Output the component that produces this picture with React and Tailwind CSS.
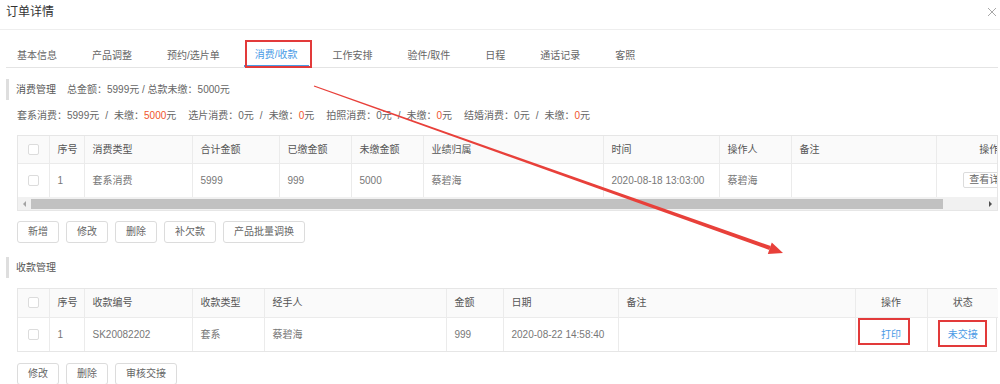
import React from 'react'

const tabs = ['基本信息', '产品调整', '预约/选片单', '消费/收款', '工作安排', '验件/取件', '日程', '通话记录', '客照']

const consume = [
  { name: '套系消费', total: '5999', unpaid: '5000' },
  { name: '选片消费', total: '0', unpaid: '0' },
  { name: '拍照消费', total: '0', unpaid: '0' },
  { name: '结婚消费', total: '0', unpaid: '0' },
]

function Checkbox() {
  return <span className="block w-[11px] h-[11px] mx-auto border border-[#dcdcdc] rounded-[2px] bg-white"></span>
}

function Btn({ children }) {
  return (
    <button className="h-[22px] px-[10px] border border-[#dcdcdc] rounded-[3px] bg-white text-[#666] leading-[20px]">
      {children}
    </button>
  )
}

function SectionTitle({ children }) {
  return (
    <div className="ml-[6px] h-[21px] flex items-center border-l-[3px] border-[#dedede] pl-[7px]">
      {children}
    </div>
  )
}

export default function App() {
  const th = 'border-r border-[#ebebeb] text-left font-normal text-[#555] pl-[8px] whitespace-nowrap'
  const td = 'border-r border-[#ebebeb] pl-[8px] text-[#777] whitespace-nowrap'

  return (
    <div className="relative w-[1000px] h-[384px] overflow-hidden bg-white text-[10px] text-[#666] font-['Liberation_Sans','Noto_Sans_CJK_SC',sans-serif]">
      {/* Header */}
      <div className="h-[30px] border-b border-[#eeeeee] flex items-start justify-between pt-[4px] pl-[6px] pr-[3px]">
        <span className="text-[12px] leading-[16px] text-[#333]">订单详情</span>
        <svg width="10" height="10" viewBox="0 0 10 10" className="mt-[3px]">
          <path d="M1 1L9 9M9 1L1 9" stroke="#a8a8a8" strokeWidth="1" />
        </svg>
      </div>

      {/* Tabs */}
      <div className="mt-[13px] mx-[6px] mr-[2px] border-b border-[#e4e4e4] flex gap-[13px]">
        {tabs.map((t) => {
          const active = t === '消费/收款'
          return (
            <div
              key={t}
              className={
                'relative h-[24px] px-[11px] flex items-center whitespace-nowrap ' +
                (active ? 'text-[#4a9be6] border-b-2 border-[#4a9be6] -mb-px' : 'text-[#666]')
              }
            >
              {t}
              {active && (
                <span className="absolute -top-[3px] left-[1px] w-[67px] h-[28px] border-2 border-[#e23a3a]"></span>
              )}
            </div>
          )
        })}
      </div>

      {/* 消费管理 */}
      <div className="mt-[11px]">
        <SectionTitle>
          <span className="text-[#555]">消费管理</span>
          <span className="ml-[11px]">总金额：5999元 / 总款未缴：5000元</span>
        </SectionTitle>
      </div>

      <div className="mt-[8px] ml-[17px] flex items-center h-[14px] whitespace-nowrap">
        {consume.map((c, i) => (
          <span key={c.name} className={i > 0 ? 'ml-[12px]' : ''}>
            {c.name}：{c.total}元<span className="mx-[6px]">/</span>未缴：<span className="text-[#f0552c]">{c.unpaid}</span>元
          </span>
        ))}
      </div>

      {/* Table 1 */}
      <div className="mt-[13px] ml-[17px] w-[981px] border border-[#e6e6e6] overflow-hidden">
        <table className="table-fixed border-collapse w-[1024px]">
          <colgroup>
            <col className="w-[31px]" />
            <col className="w-[35px]" />
            <col className="w-[108px]" />
            <col className="w-[87px]" />
            <col className="w-[72px]" />
            <col className="w-[72px]" />
            <col className="w-[180px]" />
            <col className="w-[116px]" />
            <col className="w-[72px]" />
            <col className="w-[145px]" />
            <col className="w-[106px]" />
          </colgroup>
          <thead>
            <tr className="h-[27px] bg-[#fafafa] border-b border-[#ebebeb]">
              <th className="border-r border-[#ebebeb]"><Checkbox /></th>
              <th className={th + ' pl-[7px]'}>序号</th>
              <th className={th}>消费类型</th>
              <th className={th}>合计金额</th>
              <th className={th}>已缴金额</th>
              <th className={th}>未缴金额</th>
              <th className={th}>业绩归属</th>
              <th className={th}>时间</th>
              <th className={th}>操作人</th>
              <th className={th}>备注</th>
              <th className="text-center font-normal text-[#555]">操作</th>
            </tr>
          </thead>
          <tbody>
            <tr className="h-[34px]">
              <td className="border-r border-[#ebebeb]"><Checkbox /></td>
              <td className={td + ' pl-[7px]'}>1</td>
              <td className={td}>套系消费</td>
              <td className={td}>5999</td>
              <td className={td}>999</td>
              <td className={td}>5000</td>
              <td className={td}>蔡碧海</td>
              <td className={td}>2020-08-18 13:03:00</td>
              <td className={td}>蔡碧海</td>
              <td className={td}></td>
              <td className="text-center">
                <span className="inline-block h-[16px] leading-[14px] px-[5px] border border-[#dcdcdc] rounded-[2px] text-[#666]">查看详情</span>
              </td>
            </tr>
          </tbody>
        </table>
        {/* scrollbar */}
        <div className="h-[13px] bg-[#f1f1f1] flex items-center">
          <div className="w-[13px] h-full flex items-center justify-center">
            <span className="w-0 h-0 border-y-[3px] border-y-transparent border-r-[3px] border-r-[#a3a3a3]"></span>
          </div>
          <div className="w-[912px] h-[10px] bg-[#c1c1c1]"></div>
          <div className="flex-1"></div>
          <div className="w-[13px] h-full flex items-center justify-center">
            <span className="w-0 h-0 border-y-[3px] border-y-transparent border-l-[3px] border-l-[#505050]"></span>
          </div>
        </div>
      </div>

      <div className="mt-[10px] ml-[17px] flex gap-[7px]">
        <Btn>新增</Btn>
        <Btn>修改</Btn>
        <Btn>删除</Btn>
        <Btn>补欠款</Btn>
        <Btn>产品批量调换</Btn>
      </div>

      {/* 收款管理 */}
      <div className="mt-[14px]">
        <SectionTitle>
          <span className="text-[#555]">收款管理</span>
        </SectionTitle>
      </div>

      <div className="mt-[10px] ml-[17px] w-[980px] border border-[#e6e6e6]">
        <table className="table-fixed border-collapse w-full">
          <colgroup>
            <col className="w-[31px]" />
            <col className="w-[35px]" />
            <col className="w-[108px]" />
            <col className="w-[72px]" />
            <col className="w-[182px]" />
            <col className="w-[57px]" />
            <col className="w-[115px]" />
            <col className="w-[237px]" />
            <col className="w-[72px]" />
            <col className="w-[71px]" />
          </colgroup>
          <thead>
            <tr className="h-[28px] bg-[#fafafa] border-b border-[#ebebeb]">
              <th className="border-r border-[#ebebeb]"><Checkbox /></th>
              <th className={th + ' pl-[7px]'}>序号</th>
              <th className={th}>收款编号</th>
              <th className={th}>收款类型</th>
              <th className={th}>经手人</th>
              <th className={th}>金额</th>
              <th className={th}>日期</th>
              <th className={th}>备注</th>
              <th className="border-r border-[#ebebeb] text-center font-normal text-[#555]">操作</th>
              <th className="text-center font-normal text-[#555]">状态</th>
            </tr>
          </thead>
          <tbody>
            <tr className="h-[34px]">
              <td className="border-r border-[#ebebeb]"><Checkbox /></td>
              <td className={td + ' pl-[7px]'}>1</td>
              <td className={td}>SK20082202</td>
              <td className={td}>套系</td>
              <td className={td}>蔡碧海</td>
              <td className={td}>999</td>
              <td className={td}>2020-08-22 14:58:40</td>
              <td className={td}></td>
              <td className="relative border-r border-[#ebebeb] text-center text-[#4a9be6]">
                打印
                <span className="absolute left-[2px] top-0 w-[52px] h-[27px] border-2 border-[#e23a3a]"></span>
              </td>
              <td className="relative text-center text-[#4a9be6]">
                未交接
                <span className="absolute left-[10px] top-[2px] w-[49px] h-[27px] border-2 border-[#e23a3a]"></span>
              </td>
            </tr>
          </tbody>
        </table>
      </div>

      <div className="mt-[11px] ml-[17px] flex gap-[7px]">
        <Btn>修改</Btn>
        <Btn>删除</Btn>
        <Btn>审核交接</Btn>
      </div>

      {/* annotation arrow */}
      <svg className="absolute inset-0 pointer-events-none" width="1000" height="384" viewBox="0 0 1000 384">
        <polygon points="314.2,85.5 313.8,86.5 769.3,249.9 770.7,246.1" fill="#e8403a" />
        <polygon points="783,253 767.8,253.9 771.8,242.6" fill="#e8403a" />
      </svg>
    </div>
  )
}
